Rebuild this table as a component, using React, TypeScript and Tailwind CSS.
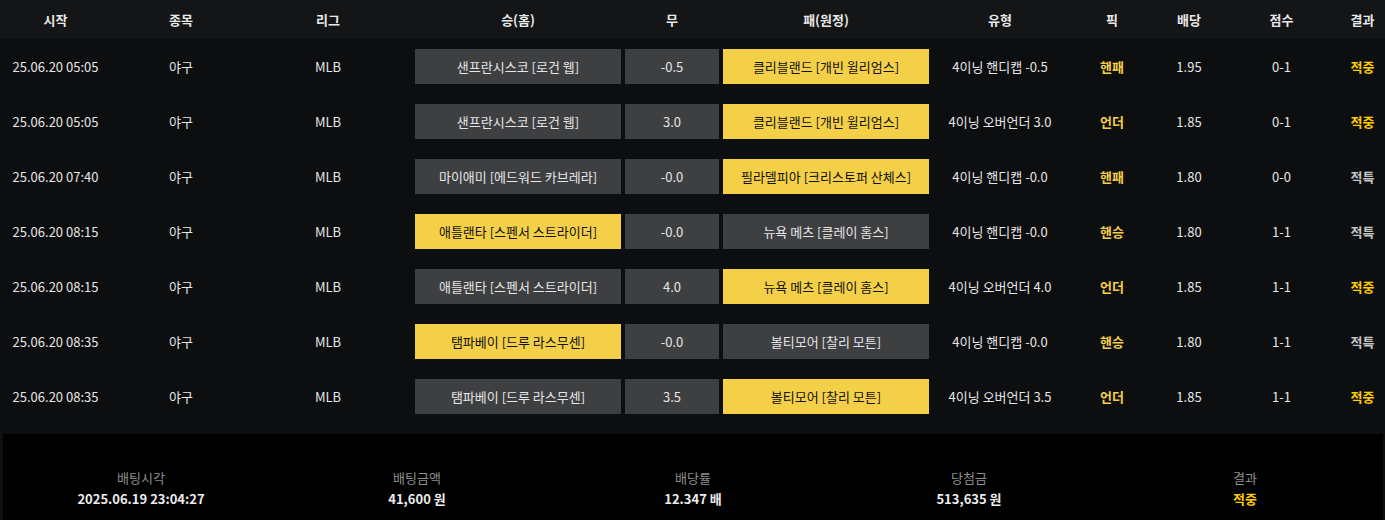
import React from "react";

const COLS =
  "grid grid-cols-[111px_140px_154px_218px_98px_210px_138px_86px_68px_117px_45px]";

type Row = {
  time: string;
  home: string;
  line: string;
  away: string;
  type: string;
  pick: string;
  odds: string;
  score: string;
  result: string;
  picked: "home" | "away";
};

const rows: Row[] = [
  { time: "25.06.20 05:05", home: "샌프란시스코 [로건 웹]", line: "-0.5", away: "클리블랜드 [개빈 윌리엄스]", type: "4이닝 핸디캡 -0.5", pick: "핸패", odds: "1.95", score: "0-1", result: "적중", picked: "away" },
  { time: "25.06.20 05:05", home: "샌프란시스코 [로건 웹]", line: "3.0", away: "클리블랜드 [개빈 윌리엄스]", type: "4이닝 오버언더 3.0", pick: "언더", odds: "1.85", score: "0-1", result: "적중", picked: "away" },
  { time: "25.06.20 07:40", home: "마이애미 [에드워드 카브레라]", line: "-0.0", away: "필라델피아 [크리스토퍼 산체스]", type: "4이닝 핸디캡 -0.0", pick: "핸패", odds: "1.80", score: "0-0", result: "적특", picked: "away" },
  { time: "25.06.20 08:15", home: "애틀랜타 [스펜서 스트라이더]", line: "-0.0", away: "뉴욕 메츠 [클레이 홈스]", type: "4이닝 핸디캡 -0.0", pick: "핸승", odds: "1.80", score: "1-1", result: "적특", picked: "home" },
  { time: "25.06.20 08:15", home: "애틀랜타 [스펜서 스트라이더]", line: "4.0", away: "뉴욕 메츠 [클레이 홈스]", type: "4이닝 오버언더 4.0", pick: "언더", odds: "1.85", score: "1-1", result: "적중", picked: "away" },
  { time: "25.06.20 08:35", home: "탬파베이 [드루 라스무센]", line: "-0.0", away: "볼티모어 [찰리 모튼]", type: "4이닝 핸디캡 -0.0", pick: "핸승", odds: "1.80", score: "1-1", result: "적특", picked: "home" },
  { time: "25.06.20 08:35", home: "탬파베이 [드루 라스무센]", line: "3.5", away: "볼티모어 [찰리 모튼]", type: "4이닝 오버언더 3.5", pick: "언더", odds: "1.85", score: "1-1", result: "적중", picked: "away" },
];

const headers = ["시작", "종목", "리그", "승(홈)", "무", "패(원정)", "유형", "픽", "배당", "점수", "결과"];

function Box({ text, active }: { text: string; active?: boolean }) {
  return (
    <div
      className={
        active
          ? "h-[35px] flex items-center justify-center bg-[#f4d048] text-[#111]"
          : "h-[35px] flex items-center justify-center bg-[#3e3f41] text-[#e6e6e6]"
      }
    >
      {text}
    </div>
  );
}

const summary = [
  { label: "배팅시각", value: "2025.06.19 23:04:27" },
  { label: "배팅금액", value: "41,600 원" },
  { label: "배당률", value: "12.347 배" },
  { label: "당첨금", value: "513,635 원" },
  { label: "결과", value: "적중", hit: true },
];

export default function App() {
  return (
    <div
      className="w-[1385px] h-[520px] overflow-hidden bg-[#0d0e10] text-[13px]"
      style={{ fontFamily: '"Noto Sans CJK KR", "Noto Sans", sans-serif' }}
    >
      <div className={`${COLS} h-[39px] bg-[#141517] text-[#e8e8e8] font-bold items-center`}>
        {headers.map((h, i) => (
          <div
            key={h + i}
            className={
              i === 3 ? "text-center pl-[10px] pr-[2px]" : i === 4 || i === 5 ? "text-center px-[2px]" : "text-center"
            }
          >
            {h}
          </div>
        ))}
      </div>

      {rows.map((r, i) => (
        <div key={i} className={`${COLS} h-[55px] items-center text-[#e6e6e6]`}>
          <div className="text-center">{r.time}</div>
          <div className="text-center">야구</div>
          <div className="text-center">MLB</div>
          <div className="pl-[10px] pr-[2px]">
            <Box text={r.home} active={r.picked === "home"} />
          </div>
          <div className="px-[2px]">
            <Box text={r.line} />
          </div>
          <div className="px-[2px]">
            <Box text={r.away} active={r.picked === "away"} />
          </div>
          <div className="text-center">{r.type}</div>
          <div className="text-center font-bold text-[#f4d048]">{r.pick}</div>
          <div className="text-center">{r.odds}</div>
          <div className="text-center">{r.score}</div>
          <div
            className={
              r.result === "적중" ? "text-center font-bold text-[#ffcc00]" : "text-center font-semibold text-[#c4c4c4]"
            }
          >
            {r.result}
          </div>
        </div>
      ))}

      <div className="mt-[10px] ml-[3px] mr-[2px] bg-black grid grid-cols-5 pt-[33px] pb-[40px]">
        {summary.map((s) => (
          <div key={s.label} className="flex flex-col items-center leading-[21px]">
            <div className="text-[#8e8e8e]">{s.label}</div>
            <div className={s.hit ? "font-bold text-[#ffcc00]" : "font-bold text-[#ececec]"}>{s.value}</div>
          </div>
        ))}
      </div>
    </div>
  );
}
